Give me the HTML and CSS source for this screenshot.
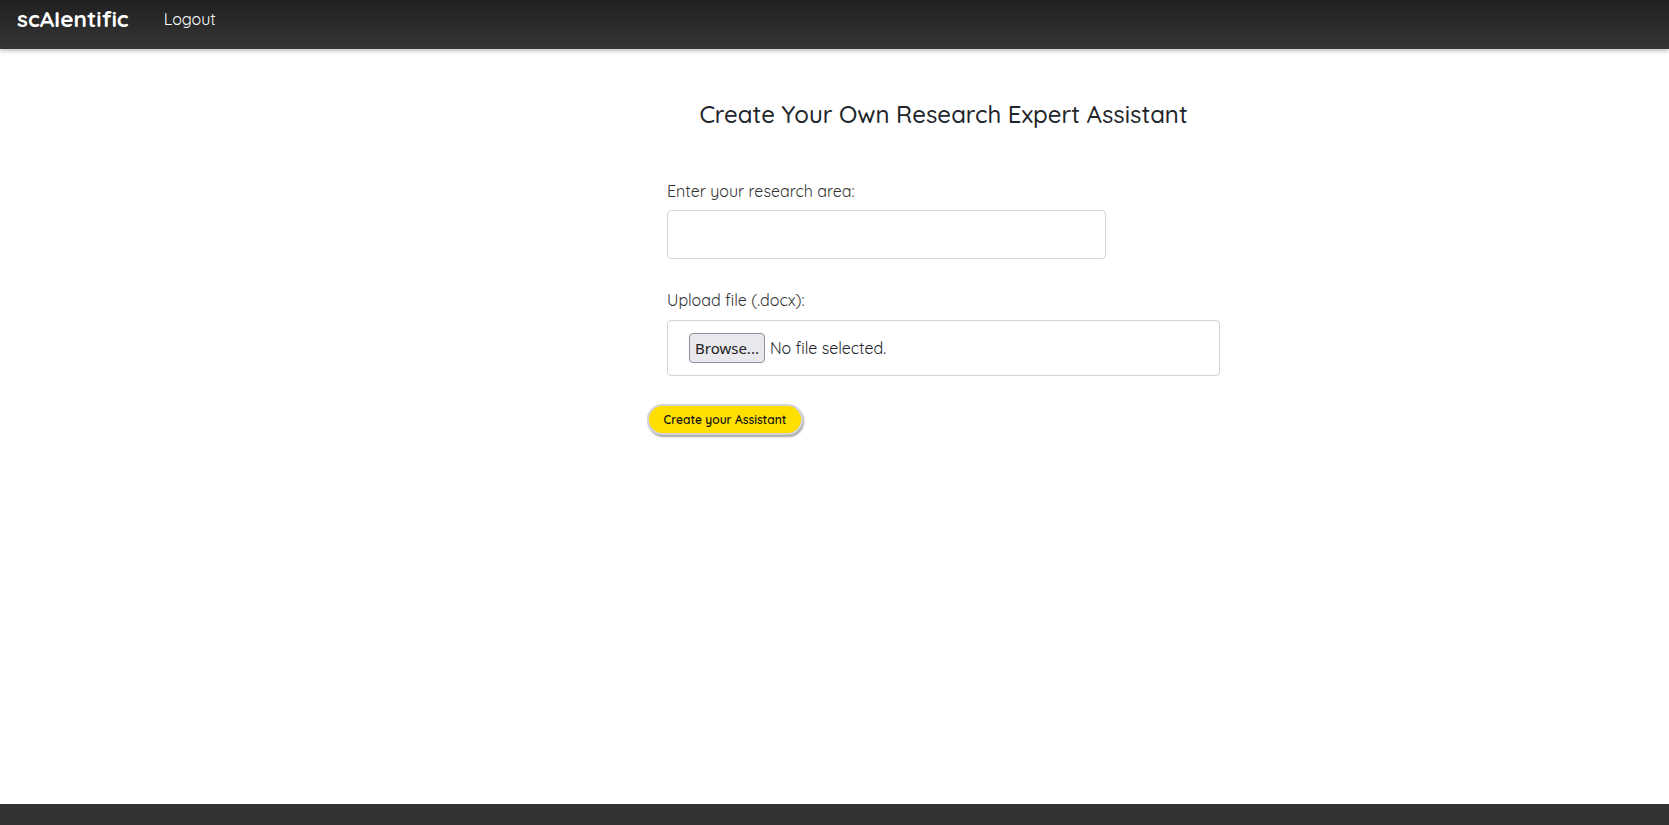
FILE: index.html
```html
<!DOCTYPE html>
<html lang="en">
<head>
<meta charset="utf-8">
<title>scAIentific</title>
<link rel="stylesheet" href="styles.css">
</head>
<body>
<header class="navbar">
  <a class="brand" href="#">scAIentific</a>
  <a class="nav-link" href="#">Logout</a>
</header>
<main class="main">
  <div class="container">
    <h1 class="title">Create Your Own Research Expert Assistant</h1>
    <form class="form">
      <div class="form-group">
        <label class="label" for="area">Enter your research area:</label>
        <input class="text-input" id="area" type="text">
      </div>
      <div class="form-group group-file">
        <label class="label">Upload file (.docx):</label>
        <div class="file-box">
          <span class="file-btn">Browse...</span>
          <span class="file-text">No file selected.</span>
        </div>
      </div>
      <button type="button" class="submit">Create your Assistant</button>
    </form>
  </div>
</main>
<footer class="footer"></footer>
</body>
</html>
```
FILE: styles.css
```css
* { box-sizing: border-box; }
html, body { height: 100%; }
body {
  margin: 0;
  font-family: "Quicksand", "Lato", "Noto Sans", sans-serif;
  color: #212529;
  background: #fff;
  display: flex;
  flex-direction: column;
  min-height: 100vh;
}
.navbar {
  height: 49px;
  background: linear-gradient(to bottom, #202020, #353535);
  box-shadow: 0 2px 4px rgba(0,0,0,0.25);
  display: flex;
  align-items: flex-start;
  padding: 0 0 0 17px;
  position: relative;
  z-index: 1;
}
.brand {
  color: #fff;
  text-decoration: none;
  font-weight: 700;
  font-size: 22.6px;
  line-height: 28px;
  padding-top: 5px;
  margin-right: 35px;
}
.nav-link {
  color: #fff;
  text-decoration: none;
  font-size: 16px;
  line-height: 20px;
  padding-top: 9px;
}
.main { flex: 1; }
.container {
  margin-left: 647px;
  width: 593px;
}
.title {
  margin: 51px 0 0;
  text-align: center;
  font-weight: 500;
  font-size: 24px;
  line-height: 1.2;
  color: #212529;
}
.form { margin-top: 50px; }
.form-group { padding: 0 20px; }
.group-file { margin-top: 29px; }
.label {
  display: block;
  font-size: 16px;
  line-height: 24px;
  color: #333;
  margin-bottom: 7px;
}
.group-file .label { margin-bottom: 8px; }
.text-input {
  display: block;
  width: 439px;
  height: 49px;
  border: 1px solid #ced4da;
  border-radius: 4px;
  padding: 6px 12px;
  font: inherit;
}
.file-box {
  width: 100%;
  height: 56px;
  border: 1px solid #ced4da;
  border-radius: 4px;
  display: flex;
  align-items: center;
  padding: 0 0 0 21px;
  font-size: 16px;
  color: #212529;
}
.file-btn {
  display: inline-flex;
  align-items: center;
  height: 30px;
  padding: 0 5px;
  background: #e9e9ed;
  border: 1px solid #8f8f9d;
  border-radius: 4px;
  color: #222;
  margin-right: 5px;
  font-family: "Noto Sans", "Open Sans", sans-serif;
  font-size: 15px;
}
.file-text { color: #212529; }
.submit {
  display: block;
  margin-top: 28px;
  width: 156px;
  height: 31px;
  border-radius: 16px;
  background: #ffdf00;
  border: 2px solid #d4d4d4;
  box-shadow: 1px 2px 2px rgba(0,0,0,0.35);
  font-family: inherit;
  font-size: 12px;
  font-weight: 600;
  color: #111;
  padding: 0;
  cursor: pointer;
}
.footer {
  height: 21px;
  background: #333;
}
```
